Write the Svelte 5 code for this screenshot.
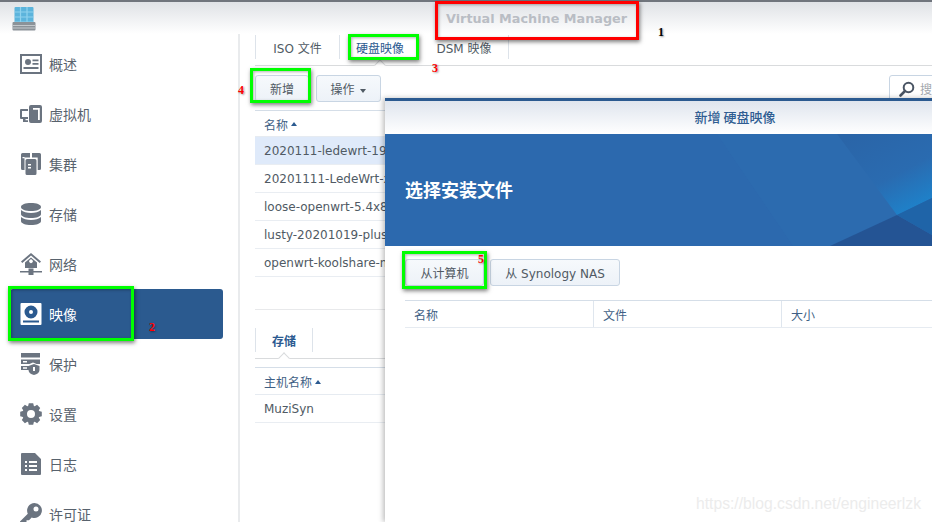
<script>
  function gear() {
    // one outline with eight teeth, hub cut out by evenodd
    const pts = [];
    for (let i = 0; i < 8; i++) {
      const a = (i * Math.PI) / 4;
      for (const [r, off] of [[8.6, -0.34], [11, -0.2], [11, 0.2], [8.6, 0.34]]) {
        pts.push((11 + r * Math.sin(a + off)).toFixed(1) + ' ' + (11 - r * Math.cos(a + off)).toFixed(1));
      }
    }
    return 'M' + pts.join('L') + 'Z';
  }

  const nav = [
    { label: '概述', d: 'M0 1h22v20H0zM2 3v16h18V3zM8 6a3 3 0 1 1 0 6a3 3 0 0 1 0-6zM12.500 6.500h6v1.800h-6zM12.500 10h6v1.800h-6zM3.500 14h15v2h-15z' },
    { label: '虚拟机', d: 'M11 2h9a2 2 0 0 1 2 2v14a2 2 0 0 1-2 2h-9a2 2 0 0 1-2-2V4a2 2 0 0 1 2-2zM13 5v1.800h5V17h1.800V5zM1 6h7v2H2v6h6v2H5.500v1.200H8V19H3v-3H1a1 1 0 0 1-1-1V7a1 1 0 0 1 1-1z' },
    { label: '集群', d: 'M7 6h8a1.500 1.500 0 0 1 1.500 1.500v13a1.500 1.500 0 0 1-1.500 1.500H7a1.500 1.500 0 0 1-1.500-1.500v-13A1.500 1.500 0 0 1 7 6zM8 11v1.500h3V11zM8 14v1.500h3V14zM2.500 0h7.500v4.500H4.500V17H2.500A1.500 1.500 0 0 1 1 15.500v-14A1.500 1.500 0 0 1 2.500 0zM2.500 4v1.200h2V4zM12 0h7.500A1.500 1.500 0 0 1 21 1.500v14a1.500 1.500 0 0 1-1.500 1.500h-1.800V4.500H12z' },
    { label: '存储', d: 'M1 4c0-2.500 4.500-4 10-4s10 1.500 10 4s-4.500 4-10 4S1 6.500 1 4zM1 7c2 2 6 3 10 3s8-1 10-3v4c0 2.500-4.500 4-10 4S1 13.500 1 11zM1 14c2 2 6 3 10 3s8-1 10-3v4c0 2.500-4.500 4-10 4S1 20.500 1 18z' },
    { label: '网络', d: 'M11 0L21 8.500l-1.300 1.400L11 2.600L2.300 9.900L1 8.500zM11 4.500l6 5V15H5V9.500zM9.700 7a1.800 1.800 0 1 0 2.600 0a1.800 1.800 0 0 0-2.600 0zM8.500 15.500h5V18H22v1.500h-8.500V22h-5v-2.500H0V18h8.500z' },
    { label: '映像', d: 'M1.500 0h19a1 1 0 0 1 1 1v20a1 1 0 0 1-1 1h-19a1 1 0 0 1-1-1V1a1 1 0 0 1 1-1zM11 2.500a6.500 6.500 0 1 0 0 13a6.500 6.500 0 0 0 0-13zM11 7a2 2 0 1 1 0 4a2 2 0 0 1 0-4zM3 17.500v2h16v-2z' },
    { label: '保护', d: 'M1 0h19v4.500H1zM1 6.500h19v4.500h-3.500l-3.500-1.500l-3.500 1.500H1zM3 8v1.500h4V8zM1 13h7.500v4H1zM3 14.200v1.500h4v-1.500zM14 11l5.500 2v4c0 2.500-2.200 4.300-5.500 5c-3.300-.7-5.500-2.500-5.500-5v-4zM13 14v4h2v-4z' },
    { label: '设置', d: gear() + 'M11 7a4 4 0 1 1 0 8a4 4 0 0 1 0-8z' },
    { label: '日志', d: 'M2 0h13l6 6v15a1 1 0 0 1-1 1H2a1 1 0 0 1-1-1V1a1 1 0 0 1 1-1zM5 8v2h2V8zM9 8v2h8V8zM5 12v2h2v-2zM9 12v2h8v-2zM5 16v2h2v-2zM9 16v2h8v-2z' },
    { label: '许可证', d: 'M14.500 0a7.500 7.500 0 1 1-2.800 14.500L9 17.200h-2.500V20h-3L1.500 22H0v-3.500l7.800-7.800A7.500 7.500 0 0 1 14.500 0zM16 3.500a2.500 2.500 0 1 0 0 5a2.500 2.500 0 0 0 0-5z' }
  ];

  const images = [
    '2020111-ledewrt-19.07.4-x86-64',
    '20201111-LedeWrt-x86-64',
    'loose-openwrt-5.4x86-64',
    'lusty-20201019-plus-x86',
    'openwrt-koolshare-mod-v2'
  ];

  const topTabs = ['ISO 文件', '硬盘映像', 'DSM 映像'];
  const fileCols = ['名称', '文件', '大小'];
</script>

<div class="app">
  <header class="topbar">
    <svg class="logo" width="24" height="24" viewBox="0 0 24 24">
      <rect x="2.500" y="0" width="19" height="16" rx="1" fill="#5cb4dc" />
      <path d="M3 5h18M3 10h18M3 15h18M8.500 0v16M15 0v16" stroke="#8fd2ee" stroke-width="1.200" />
      <rect x="0.500" y="15" width="23" height="8.500" rx="1" fill="#8b9298" />
      <path d="M1 18.500h22M1 21h22" stroke="#c3c8cc" stroke-width="1" />
    </svg>
    <span class="app-title">Virtual Machine Manager</span>
  </header>

  <div class="body">
    <aside class="sidebar">
      {#each nav as item}
        <div class="nav-item" class:selected={item.label === '映像'}>
          <svg width="22" height="22" viewBox="0 0 22 22"><path fill-rule="evenodd" d={item.d} /></svg>
          <span>{item.label}</span>
        </div>
      {/each}
    </aside>

    <main class="content">
      <section class="upper">
        <div class="tabs main-tabs">
          {#each topTabs as tab}
            <div class="tab" class:active={tab === '硬盘映像'}>{tab}</div>
          {/each}
        </div>
        <div class="toolbar">
          <button class="btn add">新增</button>
          <button class="btn ops">操作 <i class="caret"></i></button>
          <div class="search">
            <svg width="16" height="16" viewBox="0 0 16 16">
              <circle cx="9.500" cy="6.500" r="4.800" fill="none" stroke="#4a5564" stroke-width="2" />
              <path d="M6 10L1.500 14.500" stroke="#4a5564" stroke-width="2.600" stroke-linecap="round" />
            </svg>
            <span>搜索</span>
          </div>
        </div>
        <div class="list-head">名称 <i class="sort"></i></div>
        {#each images as name, i}
          <div class="row" class:current={i === 0}>{name}</div>
        {/each}
      </section>

      <section class="lower">
        <div class="tabs">
          <div class="tab active strong">存储</div>
        </div>
        <div class="list-head host">主机名称 <i class="sort"></i></div>
        <div class="row">MuziSyn</div>
      </section>
    </main>
  </div>

  <!-- wizard window, runs past the right edge of the page -->
  <div class="modal">
    <div class="modal-title">新增 硬盘映像</div>
    <div class="banner">
      <svg class="facets" width="547" height="112" viewBox="0 0 547 112">
        <defs>
          <linearGradient id="glow" gradientUnits="userSpaceOnUse" x1="470" y1="0" x2="512" y2="81">
            <stop offset="0" stop-color="#2a65a8" />
            <stop offset="0.6" stop-color="#2a6bb0" />
            <stop offset="1" stop-color="#1f80c8" />
          </linearGradient>
        </defs>
        <polygon points="332,0 408,112 547,112 547,0" fill="#2f78bb" opacity="0.14" />
        <polygon points="452,0 512,81 547,64 547,0" fill="url(#glow)" />
        <polygon points="512,81 445,112 547,112 547,101" fill="#23508f" opacity="0.85" />
        <polygon points="512,81 547,64 547,101" fill="#1f64a8" />
      </svg>
      <h2>选择安装文件</h2>
    </div>
    <div class="modal-actions">
      <button class="btn source">从计算机</button>
      <button class="btn source nas">从 Synology NAS</button>
    </div>
    <div class="file-head">
      {#each fileCols as col}
        <div class="file-col">{col}</div>
      {/each}
    </div>
  </div>

  <!-- screenshot annotations -->
  <div class="mark red box-title"></div>
  <div class="mark green box-nav"></div>
  <div class="mark green box-tab"></div>
  <div class="mark green box-add"></div>
  <div class="mark green box-source"></div>
  <span class="num n1">1</span>
  <span class="num n2">2</span>
  <span class="num n3">3</span>
  <span class="num n4">4</span>
  <span class="num n5">5</span>
  <span class="watermark">https://blog.csdn.net/engineerlzk</span>
</div>

<style>
  :global(body) {
    margin: 0;
    background: #fff;
  }

  .app {
    position: relative;
    width: 932px;
    height: 522px;
    overflow: hidden;
    background: #fff;
    font-family: "DejaVu Sans", "Noto Sans CJK SC", sans-serif;
    font-size: 12px;
    color: #505a64;
  }

  .topbar {
    display: flex;
    align-items: center;
    box-sizing: border-box;
    height: 34px;
    padding-left: 12px;
    border-top: 2px solid #70757d;
    background: linear-gradient(#dfe2e6, #ffffff);
  }

  .logo {
    margin-top: 1px;
  }

  .app-title {
    margin-left: 410px;
    font-size: 12.800px;
    font-weight: bold;
    color: #b9bdc4;
  }

  .body {
    display: flex;
    height: 488px;
    overflow: hidden;
  }

  .sidebar {
    flex: none;
    box-sizing: border-box;
    width: 240px;
    padding: 5px 15px 0 10px;
    border-right: 2px solid #e9ebed;
    font-family: "Noto Sans CJK SC", sans-serif;
    font-size: 14px;
  }

  .nav-item {
    display: flex;
    align-items: center;
    gap: 7px;
    box-sizing: border-box;
    height: 50px;
    padding-left: 10px;
    border-radius: 3px;
    color: #58626d;
  }

  .nav-item svg {
    fill: #6b7480;
    flex: none;
  }

  .nav-item.selected {
    background: #2b5a8f;
    color: #fff;
  }

  .nav-item.selected svg {
    fill: #fff;
  }

  .content {
    flex: 1;
    min-width: 0;
    padding-left: 15px;
  }

  .upper {
    box-sizing: border-box;
    height: 276px;
    border-bottom: 1px solid #e8e9eb;
  }

  .tabs {
    display: flex;
    box-sizing: border-box;
    height: 32px;
    padding-top: 1px;
    border-bottom: 1px solid #d9dbdd;
  }

  .tab {
    position: relative;
    flex: none;
    display: flex;
    align-items: center;
    justify-content: center;
    box-sizing: border-box;
    height: 24px;
    width: 58px;
    border-left: 1px solid #dde3ea;
    border-right: 1px solid #dde3ea;
    color: #505a64;
  }

  .tab.active {
    color: #2b5a90;
  }

  .main-tabs .tab:nth-child(1) {
    width: 84px;
    border-right: none;
  }

  .main-tabs .tab:nth-child(2) {
    width: 81px;
    border-right: none;
  }

  .main-tabs .tab:nth-child(3) {
    width: 89px;
    border-left: none;
  }

  .tab.active::after {
    content: "";
    position: absolute;
    left: 36px;
    bottom: -10px;
    width: 7px;
    height: 7px;
    background: #fff;
    border-top: 1px solid #d9dbdd;
    border-left: 1px solid #d9dbdd;
    transform: rotate(45deg);
  }

  .tab.strong {
    font-weight: bold;
  }

  .tab.strong::after {
    left: 24px;
  }

  .toolbar {
    display: flex;
    align-items: flex-start;
    gap: 7px;
    height: 45px;
    padding-top: 9px;
    box-sizing: border-box;
    border-bottom: 1px solid #d5dee8;
  }

  .btn {
    flex: none;
    box-sizing: border-box;
    height: 27px;
    border: 1px solid #c8d5e3;
    border-radius: 3px;
    background: linear-gradient(#f6f9fc, #edf2f8);
    font-family: "DejaVu Sans", "Noto Sans CJK SC", sans-serif;
    font-size: 12px;
    color: #505a64;
  }

  .add {
    width: 54px;
  }

  .ops {
    width: 65px;
  }

  .caret {
    display: inline-block;
    margin-left: 2px;
    vertical-align: middle;
    border: 3.500px solid transparent;
    border-top: 4px solid #505a64;
    border-bottom: none;
  }

  .search {
    flex: none;
    display: flex;
    align-items: center;
    gap: 5px;
    box-sizing: border-box;
    width: 60px;
    height: 27px;
    margin-left: 501px;
    padding-left: 9px;
    border: 1px solid #c8d5e3;
    border-radius: 3px;
    color: #a3a8ae;
    white-space: nowrap;
  }

  .list-head {
    display: flex;
    align-items: center;
    gap: 3px;
    box-sizing: border-box;
    height: 26px;
    padding: 1px 0 0 9px;
    border-bottom: 1px solid #e6ebf1;
    color: #3f5f85;
  }

  .list-head.host {
    height: 28px;
    margin-top: 8px;
    border-top: 1px solid #d5dee8;
  }

  .sort {
    border: 3.500px solid transparent;
    border-bottom: 4px solid #2b5a90;
    border-top: none;
  }

  .row {
    box-sizing: border-box;
    height: 28px;
    padding-left: 9px;
    line-height: 28px;
    border-bottom: 1px solid #e9edf2;
    white-space: nowrap;
    color: #505a64;
  }

  .row.current {
    background: #dfeafa;
  }

  .lower {
    padding-top: 17px;
  }

  .modal {
    position: absolute;
    left: 385px;
    top: 98px;
    width: 700px;
    height: 424px;
    background: #fff;
    border-top: 3px solid #2b5a90;
    box-shadow: -2px 0 5px rgba(0, 0, 0, 0.25);
    box-sizing: border-box;
  }

  .modal-title {
    height: 33px;
    line-height: 32px;
    text-align: center;
    font-family: "Noto Sans CJK SC", sans-serif;
    font-size: 13px;
    font-weight: 500;
    color: #2f5d92;
    background: linear-gradient(#dfe5ee, #ffffff);
  }

  .banner {
    position: relative;
    display: flex;
    align-items: center;
    height: 112px;
    padding-left: 20px;
    background: #2c69ae;
  }

  .facets {
    position: absolute;
    left: 0;
    top: 0;
  }

  .banner h2 {
    position: relative;
    margin: 0 0 2px;
    font-family: "Noto Sans CJK SC", sans-serif;
    font-size: 18px;
    font-weight: bold;
    color: #fff;
  }

  .modal-actions {
    display: flex;
    gap: 6px;
    padding: 13px 0 14px 20px;
  }

  .source {
    width: 79px;
  }

  .source.nas {
    width: 130px;
  }

  .file-head {
    display: grid;
    grid-template-columns: repeat(3, 188px);
    margin-left: 20px;
    height: 28px;
    box-sizing: border-box;
    border-top: 1px solid #d5dee8;
    border-bottom: 1px solid #e6ebf1;
  }

  .file-col {
    display: flex;
    align-items: center;
    box-sizing: border-box;
    padding-left: 9px;
    border-left: 1px solid #dfe6ee;
    color: #3f5f85;
  }

  .file-col:first-child {
    border-left: none;
  }

  .mark {
    position: absolute;
    box-sizing: border-box;
    box-shadow: 1px 2px 4px rgba(0, 0, 0, 0.5), inset 1px 1px 3px rgba(0, 0, 0, 0.3);
  }

  .red {
    border: 3px solid #ff0000;
  }

  .green {
    border: 3px solid #00ff00;
  }

  .box-title {
    left: 435px;
    top: 1px;
    width: 204px;
    height: 39px;
  }

  .box-nav {
    left: 8px;
    top: 286px;
    width: 126px;
    height: 55px;
  }

  .box-tab {
    left: 348px;
    top: 34px;
    width: 71px;
    height: 26px;
  }

  .box-add {
    left: 250px;
    top: 68px;
    width: 61px;
    height: 35px;
  }

  .box-source {
    left: 402px;
    top: 251px;
    width: 85px;
    height: 38px;
  }

  .num {
    position: absolute;
    font-family: "Liberation Serif", serif;
    font-size: 12px;
    font-weight: bold;
    line-height: 12px;
    color: #ff0000;
    text-shadow: 1px 1px 2px rgba(0, 0, 0, 0.4);
  }

  .n1 { left: 658px; top: 26px; color: #000; }
  .n2 { left: 149px; top: 321px; }
  .n3 { left: 432px; top: 62px; }
  .n4 { left: 238px; top: 84px; }
  .n5 { left: 478px; top: 253px; }

  .watermark {
    position: absolute;
    left: 696px;
    top: 495px;
    font-family: "Liberation Sans", sans-serif;
    font-size: 15.700px;
    color: #ececec;
    white-space: nowrap;
  }
</style>
